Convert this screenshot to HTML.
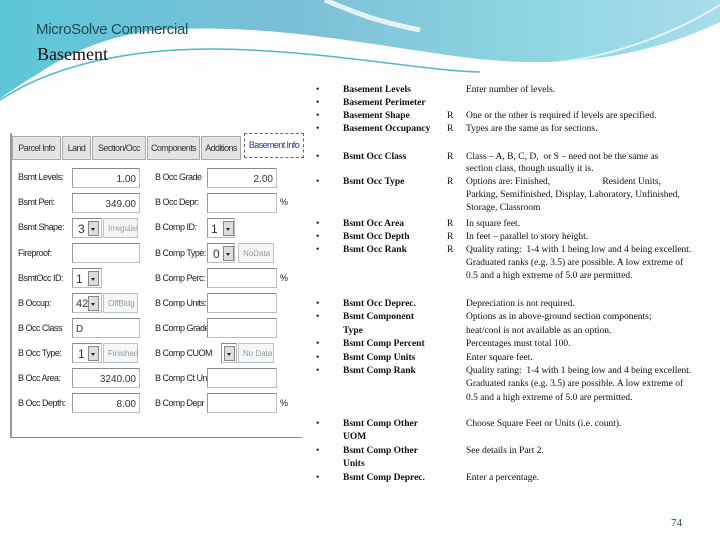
<!DOCTYPE html><html><head><style>
body{margin:0;width:720px;height:540px;position:relative;overflow:hidden;background:#fdfdfd;font-family:"Liberation Serif",serif;}
.a{position:absolute;white-space:nowrap}
.t{font-size:9.5px;color:#111;line-height:12px}
.b{font-weight:bold}
.lab{position:absolute;font-family:"Liberation Sans",sans-serif;font-size:9px;color:#222;letter-spacing:-0.5px}
.in{position:absolute;background:#fff;border:1px solid #bbb;border-top-color:#888;border-left-color:#999;height:20px;box-sizing:border-box;font-family:"Liberation Sans",sans-serif;font-size:10px;color:#333;text-align:right;padding:5px 3px 0 0}
.dd{position:absolute;width:11px;height:15px;background:#ddd;border:1px solid #888;box-sizing:border-box}
.dd:after{content:"";position:absolute;left:2px;top:6px;border:2.5px solid transparent;border-top:3px solid #222}
.gr{position:absolute;background:#f4f6f8;border:1px solid #b8c4cc;height:20px;box-sizing:border-box;font-family:"Liberation Sans",sans-serif;font-size:8px;color:#999;padding:5px 0 0 4px}
.tab{position:absolute;top:136px;height:24px;background:#e4e4e4;border:1px solid #aaa;box-sizing:border-box;font-family:"Liberation Sans",sans-serif;font-size:9px;color:#333;padding-top:6px;text-align:center;letter-spacing:-0.6px;overflow:hidden}
</style></head><body>
<svg class="a" style="left:0;top:0" width="720" height="130">
<defs><linearGradient id="g" x1="0" y1="0" x2="1" y2="0"><stop offset="0" stop-color="#5cc7d8"/><stop offset="0.4" stop-color="#7bbfd6"/><stop offset="0.75" stop-color="#8fd6e2"/><stop offset="1" stop-color="#a9dcec"/></linearGradient></defs>
<path d="M0,0H720V22C650,55 570,70 470,58C380,47 270,22 160,30C90,36 35,70 0,105Z" fill="url(#g)"/>
<path d="M0,105C40,75 100,40 180,35C280,28 380,60 480,65" stroke="#fff" stroke-width="10" fill="none"/>
<path d="M325,0C360,15 380,22 420,30" stroke="#fff" stroke-width="5" fill="none" opacity="0.8"/>
<path d="M0,100C60,60 150,45 250,50C350,55 420,70 480,72" stroke="#4fb8c8" stroke-width="1.5" fill="none"/>
<path d="M560,62C620,55 680,30 720,5" stroke="#fff" stroke-width="2" fill="none" opacity="0.7"/>
</svg>
<div class="a" style="left:36px;top:21px;font-family:'Liberation Sans',sans-serif;font-size:15px;color:#1f4a5a;letter-spacing:-0.3px">MicroSolve Commercial</div>
<div class="a" style="left:37px;top:44px;font-size:18px;color:#111">Basement</div>

<div class="a" style="left:10px;top:133px;width:290px;height:304px;border-left:2px solid #999;border-bottom:1px solid #888;background:#fff"></div>
<div class="tab" style="left:12px;width:49px">Parcel Info</div>
<div class="tab" style="left:62px;width:29px">Land</div>
<div class="tab" style="left:92px;width:54px">Section/Occ</div>
<div class="tab" style="left:147px;width:53px">Components</div>
<div class="tab" style="left:201px;width:40px">Additions</div>
<div class="tab" style="left:244px;top:133px;width:60px;height:25px;background:#fff;border:1px dashed #665;color:#223399;font-size:9px">Basement Info</div>

<div class="lab" style="left:18px;top:172px">Bsmt Levels:</div><div class="in" style="left:72px;top:168px;width:68px">1.00</div>
<div class="lab" style="left:155px;top:172px">B Occ Grade</div><div class="in" style="left:207px;top:168px;width:70px">2.00</div>
<div class="lab" style="left:18px;top:197px">Bsmt Peri:</div><div class="in" style="left:72px;top:193px;width:68px">349.00</div>
<div class="lab" style="left:155px;top:197px">B Occ Depr:</div><div class="in" style="left:207px;top:193px;width:70px"></div><div class="lab" style="left:280px;top:197px">%</div>
<div class="lab" style="left:18px;top:222px">Bsmt Shape:</div><div class="in" style="left:72px;top:218px;width:30px;text-align:left;padding-left:5px;font-size:12px;padding-top:3px">3</div><div class="dd" style="left:88px;top:221px"></div><div class="gr" style="left:103px;top:218px;width:35px">Irregular</div>
<div class="lab" style="left:155px;top:222px">B Comp ID:</div><div class="in" style="left:207px;top:218px;width:28px;text-align:left;padding-left:3px;font-size:12px;padding-top:3px">1</div><div class="dd" style="left:223px;top:221px"></div>
<div class="lab" style="left:18px;top:248px">Fireproof:</div><div class="in" style="left:72px;top:243px;width:68px"></div>
<div class="lab" style="left:155px;top:248px">B Comp Type:</div><div class="in" style="left:207px;top:243px;width:28px;text-align:left;padding-left:5px;font-size:12px;padding-top:3px">0</div><div class="dd" style="left:223px;top:246px"></div><div class="gr" style="left:238px;top:243px;width:36px">NoData</div>
<div class="lab" style="left:18px;top:273px">BsmtOcc ID:</div><div class="in" style="left:72px;top:268px;width:30px;text-align:left;padding-left:3px;font-size:12px;padding-top:3px">1</div><div class="dd" style="left:88px;top:271px"></div>
<div class="lab" style="left:155px;top:273px">B Comp Perc:</div><div class="in" style="left:207px;top:268px;width:70px"></div><div class="lab" style="left:280px;top:273px">%</div>
<div class="lab" style="left:18px;top:298px">B Occup:</div><div class="in" style="left:72px;top:293px;width:30px;text-align:left;padding-left:3px;font-size:11px;padding-top:4px">42</div><div class="dd" style="left:88px;top:296px"></div><div class="gr" style="left:103px;top:293px;width:35px">OffBldg</div>
<div class="lab" style="left:155px;top:298px">B Comp Units:</div><div class="in" style="left:207px;top:293px;width:70px"></div>
<div class="lab" style="left:18px;top:323px">B Occ Class</div><div class="in" style="left:72px;top:318px;width:68px;text-align:left;padding-left:3px">D</div>
<div class="lab" style="left:155px;top:323px">B Comp Grade</div><div class="in" style="left:207px;top:318px;width:70px"></div>
<div class="lab" style="left:18px;top:348px">B Occ Type:</div><div class="in" style="left:72px;top:343px;width:30px;text-align:left;padding-left:5px;font-size:12px;padding-top:3px">1</div><div class="dd" style="left:88px;top:346px"></div><div class="gr" style="left:103px;top:343px;width:35px">Finished</div>
<div class="lab" style="left:155px;top:348px">B Comp CUOM</div><div class="in" style="left:221px;top:343px;width:16px"></div><div class="dd" style="left:224px;top:346px"></div><div class="gr" style="left:238px;top:343px;width:36px">No Data</div>
<div class="lab" style="left:18px;top:373px">B Occ Area:</div><div class="in" style="left:72px;top:368px;width:68px">3240.00</div>
<div class="lab" style="left:155px;top:373px">B Comp Ct Un:</div><div class="in" style="left:207px;top:368px;width:70px"></div>
<div class="lab" style="left:18px;top:398px">B Occ Depth:</div><div class="in" style="left:72px;top:393px;width:68px">8.00</div>
<div class="lab" style="left:155px;top:398px">B Comp Depr</div><div class="in" style="left:207px;top:393px;width:70px"></div><div class="lab" style="left:280px;top:398px">%</div>

<div class="t">
<div class="a" style="left:316px;top:84px;line-height:13px">•<br>•<br>•<br>•</div>
<div class="a b" style="left:343px;top:84px;line-height:13px">Basement Levels<br>Basement Perimeter<br>Basement Shape<br>Basement Occupancy</div>
<div class="a" style="left:447px;top:110px;line-height:13px">R<br>R</div>
<div class="a" style="left:466px;top:84px;line-height:13px">Enter number of levels.<br><br>One or the other is required if levels are specified.<br>Types are the same as for sections.</div>

<div class="a" style="left:316px;top:151px">•</div><div class="a b" style="left:343px;top:151px">Bsmt Occ Class</div><div class="a" style="left:447px;top:151px">R</div>
<div class="a" style="left:466px;top:151px">Class – A, B, C, D,&nbsp; or S – need not be the same as<br>section class, though usually it is.</div>
<div class="a" style="left:316px;top:176px">•</div><div class="a b" style="left:343px;top:176px">Bsmt Occ Type</div><div class="a" style="left:447px;top:176px">R</div>
<div class="a" style="left:466px;top:176px;line-height:13px">Options are: Finished, &nbsp;&nbsp;&nbsp;&nbsp;&nbsp;&nbsp;&nbsp;&nbsp;&nbsp;&nbsp;&nbsp;&nbsp;&nbsp;&nbsp;&nbsp;&nbsp;&nbsp;&nbsp;&nbsp;&nbsp;&nbsp;Resident Units,<br>Parking, Semifinished, Display, Laboratory, Unfinished,<br>Storage, Classroom</div>

<div class="a" style="left:316px;top:218px;line-height:13px">•<br>•<br>•</div>
<div class="a b" style="left:343px;top:218px;line-height:13px">Bsmt Occ Area<br>Bsmt Occ Depth<br>Bsmt Occ Rank</div>
<div class="a" style="left:447px;top:218px;line-height:13px">R<br>R<br>R</div>
<div class="a" style="left:466px;top:218px;line-height:13px">In square feet.<br>In feet – parallel to story height.<br>Quality rating:&nbsp; 1-4 with 1 being low and 4 being excellent.<br>Graduated ranks (e.g. 3.5) are possible. A low extreme of<br>0.5 and a high extreme of 5.0 are permitted.</div>

<div class="a" style="left:316px;top:298px;line-height:13.4px">•<br>•<br><br>•<br>•<br>•</div>
<div class="a b" style="left:343px;top:298px;line-height:13.4px">Bsmt Occ Deprec.<br>Bsmt Component<br>Type<br>Bsmt Comp Percent<br>Bsmt Comp Units<br>Bsmt Comp Rank</div>
<div class="a" style="left:466px;top:298px;line-height:13.4px">Depreciation is not required.<br>Options as in above-ground section components;<br>heat/cool is not available as an option.<br>Percentages must total 100.<br>Enter square feet.<br>Quality rating:&nbsp; 1-4 with 1 being low and 4 being excellent.<br>Graduated ranks (e.g. 3.5) are possible. A low extreme of<br>0.5 and a high extreme of 5.0 are permitted.</div>

<div class="a" style="left:316px;top:418px">•</div><div class="a b" style="left:343px;top:418px;line-height:13px">Bsmt Comp Other<br>UOM</div><div class="a" style="left:466px;top:418px">Choose Square Feet or Units (i.e. count).</div>
<div class="a" style="left:316px;top:445px">•</div><div class="a b" style="left:343px;top:445px;line-height:13px">Bsmt Comp Other<br>Units</div><div class="a" style="left:466px;top:445px">See details in Part 2.</div>
<div class="a" style="left:316px;top:472px">•</div><div class="a b" style="left:343px;top:472px">Bsmt Comp Deprec.</div><div class="a" style="left:466px;top:472px">Enter a percentage.</div>
</div>
<div class="a" style="left:671px;top:517px;font-size:11px;color:#1f4a5a">74</div>
</body></html>
